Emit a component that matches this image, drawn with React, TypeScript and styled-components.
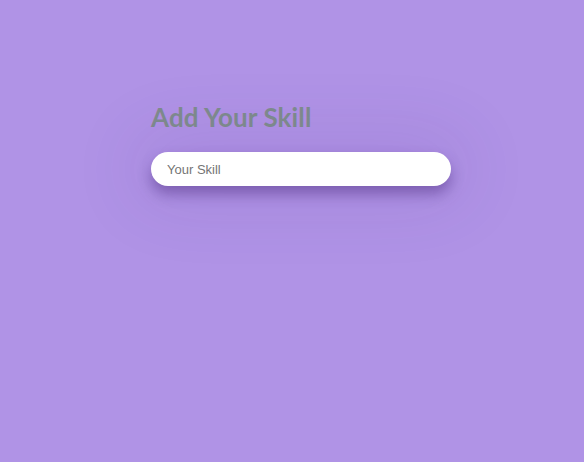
import React from "react";
import styled, { createGlobalStyle } from "styled-components";

const Global = createGlobalStyle`
  html, body {
    margin: 0;
    padding: 0;
    background: #b093e6;
    min-height: 100%;
  }
  body {
    font-family: "Liberation Sans", Arial, sans-serif;
  }
`;

const Page = styled.div`
  width: 584px;
  height: 462px;
  background: #b093e6;
  padding: 101px 0 0 151px;
  box-sizing: border-box;
`;

const Form = styled.section`
  width: 300px;
  display: flex;
  flex-direction: column;
  gap: 19px;
`;

const Title = styled.h2`
  margin: 0;
  font-family: Lato, "Open Sans", sans-serif;
  font-weight: 700;
  font-size: 26px;
  line-height: 32px;
  letter-spacing: 0.1px;
  color: #7f8c8d;
`;

const Input = styled.input`
  width: 300px;
  height: 34px;
  box-sizing: border-box;
  border: none;
  border-radius: 17px;
  background: #fff;
  padding: 0 16px;
  font-family: "Liberation Sans", Arial, sans-serif;
  font-size: 13px;
  color: #555;
  outline: none;
  box-shadow: 0 8px 14px rgba(70, 40, 120, 0.45),
    0 0 70px 20px rgba(70, 30, 130, 0.09);
  &::placeholder {
    color: #757575;
  }
`;

export default function App() {
  return (
    <>
      <Global />
      <Page>
        <Form>
          <Title>Add Your Skill</Title>
          <Input placeholder="Your Skill" />
        </Form>
      </Page>
    </>
  );
}
